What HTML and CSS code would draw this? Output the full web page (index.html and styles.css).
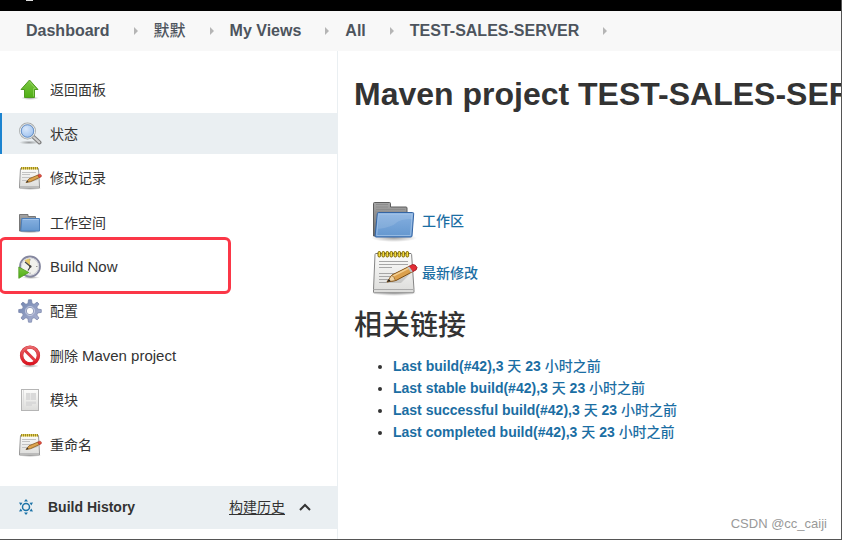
FILE: index.html
```html
<!DOCTYPE html>
<html lang="zh-CN">
<head>
    <meta charset="UTF-8">
    <title>TEST-SALES-SERVER [Jenkins]</title>
    <link rel="stylesheet" href="styles.css">
</head>
<body>
    <!-- shared icons -->
    <svg class="sprite" width="0" height="0" aria-hidden="true">
        <defs>
            <linearGradient id="gPaper" x1="0" y1="0" x2="0" y2="1">
                <stop offset="0" stop-color="#fcfcfb"/>
                <stop offset="1" stop-color="#dcdcda"/>
            </linearGradient>
            <linearGradient id="gFolder" x1="0" y1="0" x2="0" y2="1">
                <stop offset="0" stop-color="#86b0e0"/>
                <stop offset="1" stop-color="#6497cf"/>
            </linearGradient>
            <linearGradient id="gBack" x1="0" y1="0" x2="0" y2="1">
                <stop offset="0" stop-color="#a5a5a5"/>
                <stop offset="1" stop-color="#6c6c6c"/>
            </linearGradient>
            <linearGradient id="gGreen" x1="0" y1="0" x2="0" y2="1">
                <stop offset="0" stop-color="#7cc843"/>
                <stop offset="1" stop-color="#4fae14"/>
            </linearGradient>
            <linearGradient id="gGear" x1="0" y1="0" x2="1" y2="1">
                <stop offset="0" stop-color="#6b81ad"/>
                <stop offset="1" stop-color="#b3b8d6"/>
            </linearGradient>
            <linearGradient id="gRed" x1="0" y1="0" x2="0" y2="1">
                <stop offset="0" stop-color="#e8676b"/>
                <stop offset="1" stop-color="#dc1420"/>
            </linearGradient>
            <radialGradient id="gLens" cx="40%" cy="35%" r="65%">
                <stop offset="0" stop-color="#d9e8fb"/>
                <stop offset="1" stop-color="#9cc0ee"/>
            </radialGradient>
            <radialGradient id="gShadow">
                <stop offset="0" stop-color="#000" stop-opacity=".35"/>
                <stop offset="1" stop-color="#000" stop-opacity="0"/>
            </radialGradient>
        </defs>

        <symbol id="icon-folder" viewBox="0 0 48 48">
            <ellipse cx="24" cy="41" rx="23" ry="4" fill="url(#gShadow)"/>
            <path d="M3.500 39V6.500q0-1 1-1h15q1 0 1 1V10h15.500q1 0 1 1v28z" fill="url(#gBack)" stroke="#5c5c5c"/>
            <path d="M6 7.500h12M6 10h12M6 12.500h29M5 15h31M5 18h3M5 21h2M5 24h2" stroke="#8c8c8c" fill="none"/>
            <path d="M8.500 15.500h34q1.300 0 1.200 1.300l-1.700 22.200q-.1 1-1.200 1H6q-1 0-.9-1.100L7.300 16.700q.1-1.200 1.200-1.200z" fill="url(#gFolder)" stroke="#3465a4"/>
            <path d="M8.500 17h33.700l-1.600 21.500H6.700z" fill="none" stroke="#a9c8ea" stroke-opacity=".7"/>
            <path d="M8 32q14-2 18-6t16-4l.4-5H9z" fill="#fff" fill-opacity=".12"/>
        </symbol>

        <symbol id="icon-folder-small" viewBox="0 0 24 24">
            <ellipse cx="12" cy="20.500" rx="11" ry="2" fill="url(#gShadow)"/>
            <path d="M1.500 20V3.500h8.500v2h7.500V20z" fill="url(#gBack)" stroke="#777"/>
            <path d="M3.800 7.500h17.700V20H2.800z" fill="url(#gFolder)" stroke="#4c7fbb"/>
            <path d="M4.800 8.500h15.700" stroke="#a5c5ea"/>
        </symbol>

        <symbol id="icon-notepad" viewBox="0 0 48 48">
            <ellipse cx="24" cy="44" rx="23" ry="3" fill="url(#gShadow)"/>
            <path d="M6 4.500h34.500q1 0 1.100 1L44 40.500V43q0 .8-1 .8H4.500q-1 0-1-.8v-2.500L5 5.500q0-1 1-1z" fill="url(#gPaper)" stroke="#858585"/>
            <path d="M4 40.500h39.500" stroke="#aaa"/>
            <path d="M9 12.500h29M9 15.500h29M9 18.500h13M9 24.500h24M9 27.500h18M9 30.500h9M9 33.500h8" stroke="#a6a6a6"/>
            <path d="M6 4.500h35" stroke="#777"/>
            <g fill="#f4dc42" stroke="#7c6500">
                <rect x="8" y="2.500" width="2.600" height="5.500" rx="1.300"/>
                <rect x="12" y="2.500" width="2.600" height="5.500" rx="1.300"/>
                <rect x="16" y="2.500" width="2.600" height="5.500" rx="1.300"/>
                <rect x="20" y="2.500" width="2.600" height="5.500" rx="1.300"/>
                <rect x="24" y="2.500" width="2.600" height="5.500" rx="1.300"/>
                <rect x="28" y="2.500" width="2.600" height="5.500" rx="1.300"/>
                <rect x="32" y="2.500" width="2.600" height="5.500" rx="1.300"/>
                <rect x="36" y="2.500" width="2.600" height="5.500" rx="1.300"/>
            </g>
            <path d="M18 34l13 0 10-10z" fill="#000" fill-opacity=".13"/>
            <path d="M17 33l5-7 18-9 3.500 5.200L26 31.500z" fill="#dba04c" stroke="#7d4d12"/>
            <path d="M22 27.500l18-9" stroke="#f2cd8f" stroke-width="1.500"/>
            <path d="M17 33l4.500-6.500q2 .5 2.500 2t1.500 3z" fill="#eed3a5" stroke="#7d4d12" stroke-width=".6"/>
            <path d="M17 33l2-3 1.700 2.200z" fill="#222"/>
            <path d="M39 17.500l3.500 5.200q5-1.500 4.500-4.200-1.500-3.500-4.500-3z" fill="#e22d35" stroke="#9b1219" stroke-width=".8"/>
            <path d="M37.500 18.300l3.400 5.200 1.800-.9-3.400-5.200z" fill="#bfc3c4"/>
        </symbol>

        <symbol id="icon-notepad-small" viewBox="0 0 24 24">
            <ellipse cx="12" cy="22.500" rx="11.500" ry="1.500" fill="url(#gShadow)"/>
            <path d="M2.500 2.500h18l1 17.500v2H1.500v-2z" fill="url(#gPaper)" stroke="#999"/>
            <path d="M2 20.500h19" stroke="#bbb"/>
            <path d="M4 6.500h14M4 8.500h8M4 11.500h10M4 14.500h5" stroke="#c3c3c3"/>
            <path d="M3 1h17v2.500H3z" fill="#e3cf57"/>
            <path d="M3.500 1v2.500M5.500 1v2.500M7.500 1v2.500M9.500 1v2.500M11.500 1v2.500M13.500 1v2.500M15.500 1v2.500M17.500 1v2.500M19.500 1v2.500" stroke="#8a7716" stroke-width=".8"/>
            <path d="M9 17l11-3v-2z" fill="#000" fill-opacity=".15"/>
            <path d="M8 16.500l3-3.700 9-3.800 1.500 2.500-9 4.200z" fill="#dca44f" stroke="#8a5a1c" stroke-width=".8"/>
            <path d="M8 16.500l1.500-2 1 1.400z" fill="#333"/>
            <path d="M19.800 9l1.600 2.700q2.300-.7 2.200-2-.7-1.800-2.100-1.500z" fill="#e0503f" stroke="#a52c22" stroke-width=".5"/>
        </symbol>
    </svg>

    <header class="topbar"><span class="topbar-mark"></span></header>

    <nav class="breadcrumbs" aria-label="Breadcrumb">
        <a href="#">Dashboard</a>
        <a href="#" class="zh">默默</a>
        <a href="#">My Views</a>
        <a href="#">All</a>
        <a href="#">TEST-SALES-SERVER</a>
    </nav>

    <div class="page">
        <aside class="sidebar">
            <nav class="tasks">
                <a class="task" href="#">
                    <svg class="task-icon" viewBox="0 0 24 24">
                        <ellipse cx="12" cy="20" rx="9" ry="2" fill="url(#gShadow)"/>
                        <path d="M11.500 2l8.500 9.500h-3.500v8h-10v-8H3z" fill="url(#gGreen)" stroke="#4f9a20" stroke-linejoin="round"/>
                        <path d="M11.500 3.700l6 6.800h-2v8" fill="none" stroke="#a9e07c" stroke-opacity=".6"/>
                    </svg>
                    <span>返回面板</span>
                </a>
                <a class="task active" href="#">
                    <svg class="task-icon" viewBox="0 0 24 24">
                        <ellipse cx="11" cy="20.500" rx="10" ry="2" fill="url(#gShadow)"/>
                        <path d="M15 14.500l6.500 6" stroke="#7d7d7d" stroke-width="4" stroke-linecap="round"/>
                        <path d="M15 14.500l6.300 5.800" stroke="#cfcfcf" stroke-width="2" stroke-linecap="round"/>
                        <circle cx="9.500" cy="9" r="7.400" fill="url(#gLens)" stroke="#a3a6a7" stroke-width="2"/>
                        <circle cx="9.500" cy="9" r="7.200" fill="none" stroke="#eef0f0"/>
                        <circle cx="9.500" cy="9" r="6.200" fill="none" stroke="#5f8dca" stroke-width=".9"/>
                    </svg>
                    <span>状态</span>
                </a>
                <a class="task" href="#">
                    <svg class="task-icon"><use href="#icon-notepad-small"/></svg>
                    <span>修改记录</span>
                </a>
                <a class="task" href="#">
                    <svg class="task-icon"><use href="#icon-folder-small"/></svg>
                    <span>工作空间</span>
                </a>
                <a class="task marked" href="#">
                    <svg class="task-icon" viewBox="0 0 24 24">
                        <ellipse cx="13" cy="22.500" rx="9" ry="1.500" fill="url(#gShadow)"/>
                        <circle cx="12" cy="11.500" r="10" fill="#f1f1ed" stroke="#85879f" stroke-width="1.800"/>
                        <circle cx="12" cy="11.500" r="8.600" fill="none" stroke="#d0d1da"/>
                        <path d="M12 11L6.500 5.500Q8.500 3.800 12 3.500z" fill="#e5c765"/>
                        <path d="M7 7l5.500 4.500-2.500 4" fill="none" stroke="#444" stroke-width="1.200"/>
                        <circle cx="12.300" cy="11.500" r="1.200" fill="#444"/>
                        <path d="M12 4v1.500M19.500 11.500H18M12 19v-1.500" stroke="#999"/>
                        <path d="M.8 12l10 5.500-10 5.800z" fill="url(#gGreen)" stroke="#4f9a20" stroke-width=".8"/>
                    </svg>
                    <span class="latin">Build Now</span>
                </a>
                <a class="task" href="#">
                    <svg class="task-icon" viewBox="0 0 24 24">
                        <path fill-rule="evenodd" d="M10.500.8h3l.6 3.700 2 .8 3-2.200 1.900 1.900-2.200 3 .8 2 3.700.6v2.800l-3.700.6-.8 2 2.200 3-1.900 1.900-3-2.200-2 .8-.6 3.700h-3l-.6-3.700-2-.8-3 2.200L3 19l2.200-3-.8-2-3.700-.6v-2.800l3.700-.6.8-2L3 5l1.900-1.900 3 2.200 2-.8zM12 8.300a3.700 3.700 0 1 0 0 7.400 3.700 3.700 0 0 0 0-7.400z" fill="url(#gGear)" stroke="#7581a8" stroke-width=".7"/>
                        <circle cx="12" cy="12" r="4.600" fill="none" stroke="#dfe3f1" stroke-opacity=".6"/>
                    </svg>
                    <span>配置</span>
                </a>
                <a class="task" href="#">
                    <svg class="task-icon" viewBox="0 0 24 24">
                        <ellipse cx="12" cy="22" rx="9" ry="1.800" fill="url(#gShadow)"/>
                        <circle cx="12" cy="11.500" r="8.400" fill="#fff" stroke="#cb2b33" stroke-width="3.400"/>
                        <path d="M6 5.500l12 12" stroke="#df3a42" stroke-width="3"/>
                        <circle cx="12" cy="11.500" r="8.400" fill="none" stroke="url(#gRed)" stroke-width="2.600"/>
                    </svg>
                    <span>删除 <span class="latin">Maven project</span></span>
                </a>
                <a class="task" href="#">
                    <svg class="task-icon" viewBox="0 0 24 24">
                        <rect x="3.500" y="1.500" width="17" height="21" fill="url(#gPaper)" stroke="#b5b5b5"/>
                        <path d="M5.500 2v20" stroke="#dedede"/>
                        <path d="M8 5h4v7H8zM12.500 5H18v7h-5.500zM8 13.500h10V16H8zM8 16h6v2H8z" fill="#d9d9d9"/>
                    </svg>
                    <span>模块</span>
                </a>
                <a class="task" href="#">
                    <svg class="task-icon"><use href="#icon-notepad-small"/></svg>
                    <span>重命名</span>
                </a>
            </nav>

            <section class="history">
                <svg class="history-icon" viewBox="0 0 16 16">
                    <circle cx="8" cy="8" r="3.500" fill="none" stroke="#1b73a8" stroke-width="1.500"/>
                    <path d="M6 2.500h4L8 0zM6 13.500h4L8 16zM1 3.500l3.500.2-1.800 2.800zM15 3.500l-3.500.2 1.800 2.800zM1 12.500l3.500-.2-1.800-2.800zM15 12.500l-3.500-.2 1.800-2.800z" fill="#1b73a8"/>
                </svg>
                <h2 class="history-title">Build History</h2>
                <a class="history-link" href="#">构建历史</a>
                <button class="history-toggle" type="button" aria-label="collapse">
                    <svg width="12" height="8" viewBox="0 0 12 8"><path d="M1 7l5-5 5 5" fill="none" stroke="#333" stroke-width="2"/></svg>
                </button>
            </section>
        </aside>

        <main class="main">
            <h1>Maven project TEST-SALES-SERVER</h1>

            <div class="shortcuts">
                <a class="shortcut" href="#">
                    <svg class="shortcut-icon"><use href="#icon-folder"/></svg>
                    <span>工作区</span>
                </a>
                <a class="shortcut" href="#">
                    <svg class="shortcut-icon"><use href="#icon-notepad"/></svg>
                    <span>最新修改</span>
                </a>
            </div>

            <h2 class="links-title">相关链接</h2>
            <ul class="permalinks">
                <li><a href="#">Last build(#42),3 <span class="zh">天</span> 23 <span class="zh">小时之前</span></a></li>
                <li><a href="#">Last stable build(#42),3 <span class="zh">天</span> 23 <span class="zh">小时之前</span></a></li>
                <li><a href="#">Last successful build(#42),3 <span class="zh">天</span> 23 <span class="zh">小时之前</span></a></li>
                <li><a href="#">Last completed build(#42),3 <span class="zh">天</span> 23 <span class="zh">小时之前</span></a></li>
            </ul>

            <p class="watermark">CSDN @cc_caiji</p>
        </main>
    </div>
</body>
</html>
```
FILE: styles.css
```css
*,
*::before,
*::after {
    margin: 0;
    padding: 0;
    box-sizing: border-box;
}

body {
    display: flex;
    flex-direction: column;
    min-height: 100vh;
    font-family: "Liberation Sans", "Noto Sans CJK SC", sans-serif;
    font-size: 14px;
    line-height: 22px;
    color: #333;
    background: #fff;
    border-right: 1px solid #555;
    border-bottom: 1px solid #555;
    overflow: hidden;
}

a {
    color: inherit;
    text-decoration: none;
}

.sprite {
    position: absolute;
}

.zh {
    font-weight: 500;
}

.topbar {
    height: 11px;
    padding-left: 26px;
    background: #000;
}

.topbar-mark {
    display: block;
    width: 7px;
    height: 1px;
    background: #ddd;
}

/* breadcrumbs */
.breadcrumbs {
    display: flex;
    align-items: center;
    height: 40px;
    padding-left: 26px;
    background: #f8f8f8;
    color: #4d545d;
    font-size: 16px;
    font-weight: bold;
    white-space: nowrap;
}

.breadcrumbs a {
    display: flex;
    align-items: center;
}

.breadcrumbs .zh {
    font-weight: 500;
}

.breadcrumbs a::after {
    content: "";
    margin: 0 16px 0 24px;
    border: 4px solid transparent;
    border-left-color: #b5b5b5;
    border-right-width: 0;
}

.page {
    display: flex;
    flex: 1;
}

/* sidebar */
.sidebar {
    display: flex;
    flex-direction: column;
    flex: 0 0 338px;
    padding-bottom: 10px;
    border-right: 1px solid #eaeff2;
}

.tasks {
    display: flex;
    flex-direction: column;
    flex: 1;
    justify-content: space-between;
    padding: 18px 0 21px;
}

.task {
    position: relative;
    display: flex;
    align-items: center;
    gap: 8px;
    height: 41px;
    padding-left: 16px;
    border-left: 2px solid transparent;
}

.task.active {
    background: #eaeff2;
    border-left-color: #1c84d0;
}

.task.marked::after {
    content: "";
    position: absolute;
    top: -10px;
    left: -3px;
    width: 232px;
    height: 57px;
    border: 3px solid #fb3747;
    border-radius: 6px;
}

.task-icon {
    width: 24px;
    height: 24px;
}

.latin {
    font-size: 15px;
}

.history {
    display: flex;
    align-items: center;
    height: 43px;
    padding: 0 26px 2px 18px;
    background: #eaeff2;
}

.history-icon {
    width: 16px;
    height: 16px;
    margin-right: 14px;
}

.history-title {
    flex: 1;
    font-size: 14px;
}

.history-link {
    text-decoration: underline;
    text-underline-offset: 2px;
}

.history-toggle {
    display: flex;
    margin-left: 14px;
    border: 0;
    background: none;
    cursor: pointer;
}

/* main panel */
.main {
    display: flex;
    flex-direction: column;
    flex: 1;
    min-width: 0;
    padding: 22px 14px 4px 16px;
    overflow: hidden;
}

h1 {
    font-size: 32px;
    line-height: 42px;
    white-space: nowrap;
}

.shortcuts {
    display: flex;
    flex-direction: column;
    gap: 4px;
    padding: 82px 0 0 16px;
}

.shortcut {
    display: flex;
    align-items: center;
    gap: 4px;
    color: #1b6ea3;
    font-weight: 500;
}

.shortcut-icon {
    width: 48px;
    height: 48px;
}

.links-title {
    margin-top: 8px;
    font-size: 28px;
    font-weight: 500;
    line-height: 42px;
}

.permalinks {
    margin-top: 8px;
    padding-left: 39px;
}

.permalinks a {
    color: #1b6ea3;
    font-weight: bold;
}

.watermark {
    margin-top: auto;
    color: #999;
    font-size: 13px;
    text-align: right;
}
```
